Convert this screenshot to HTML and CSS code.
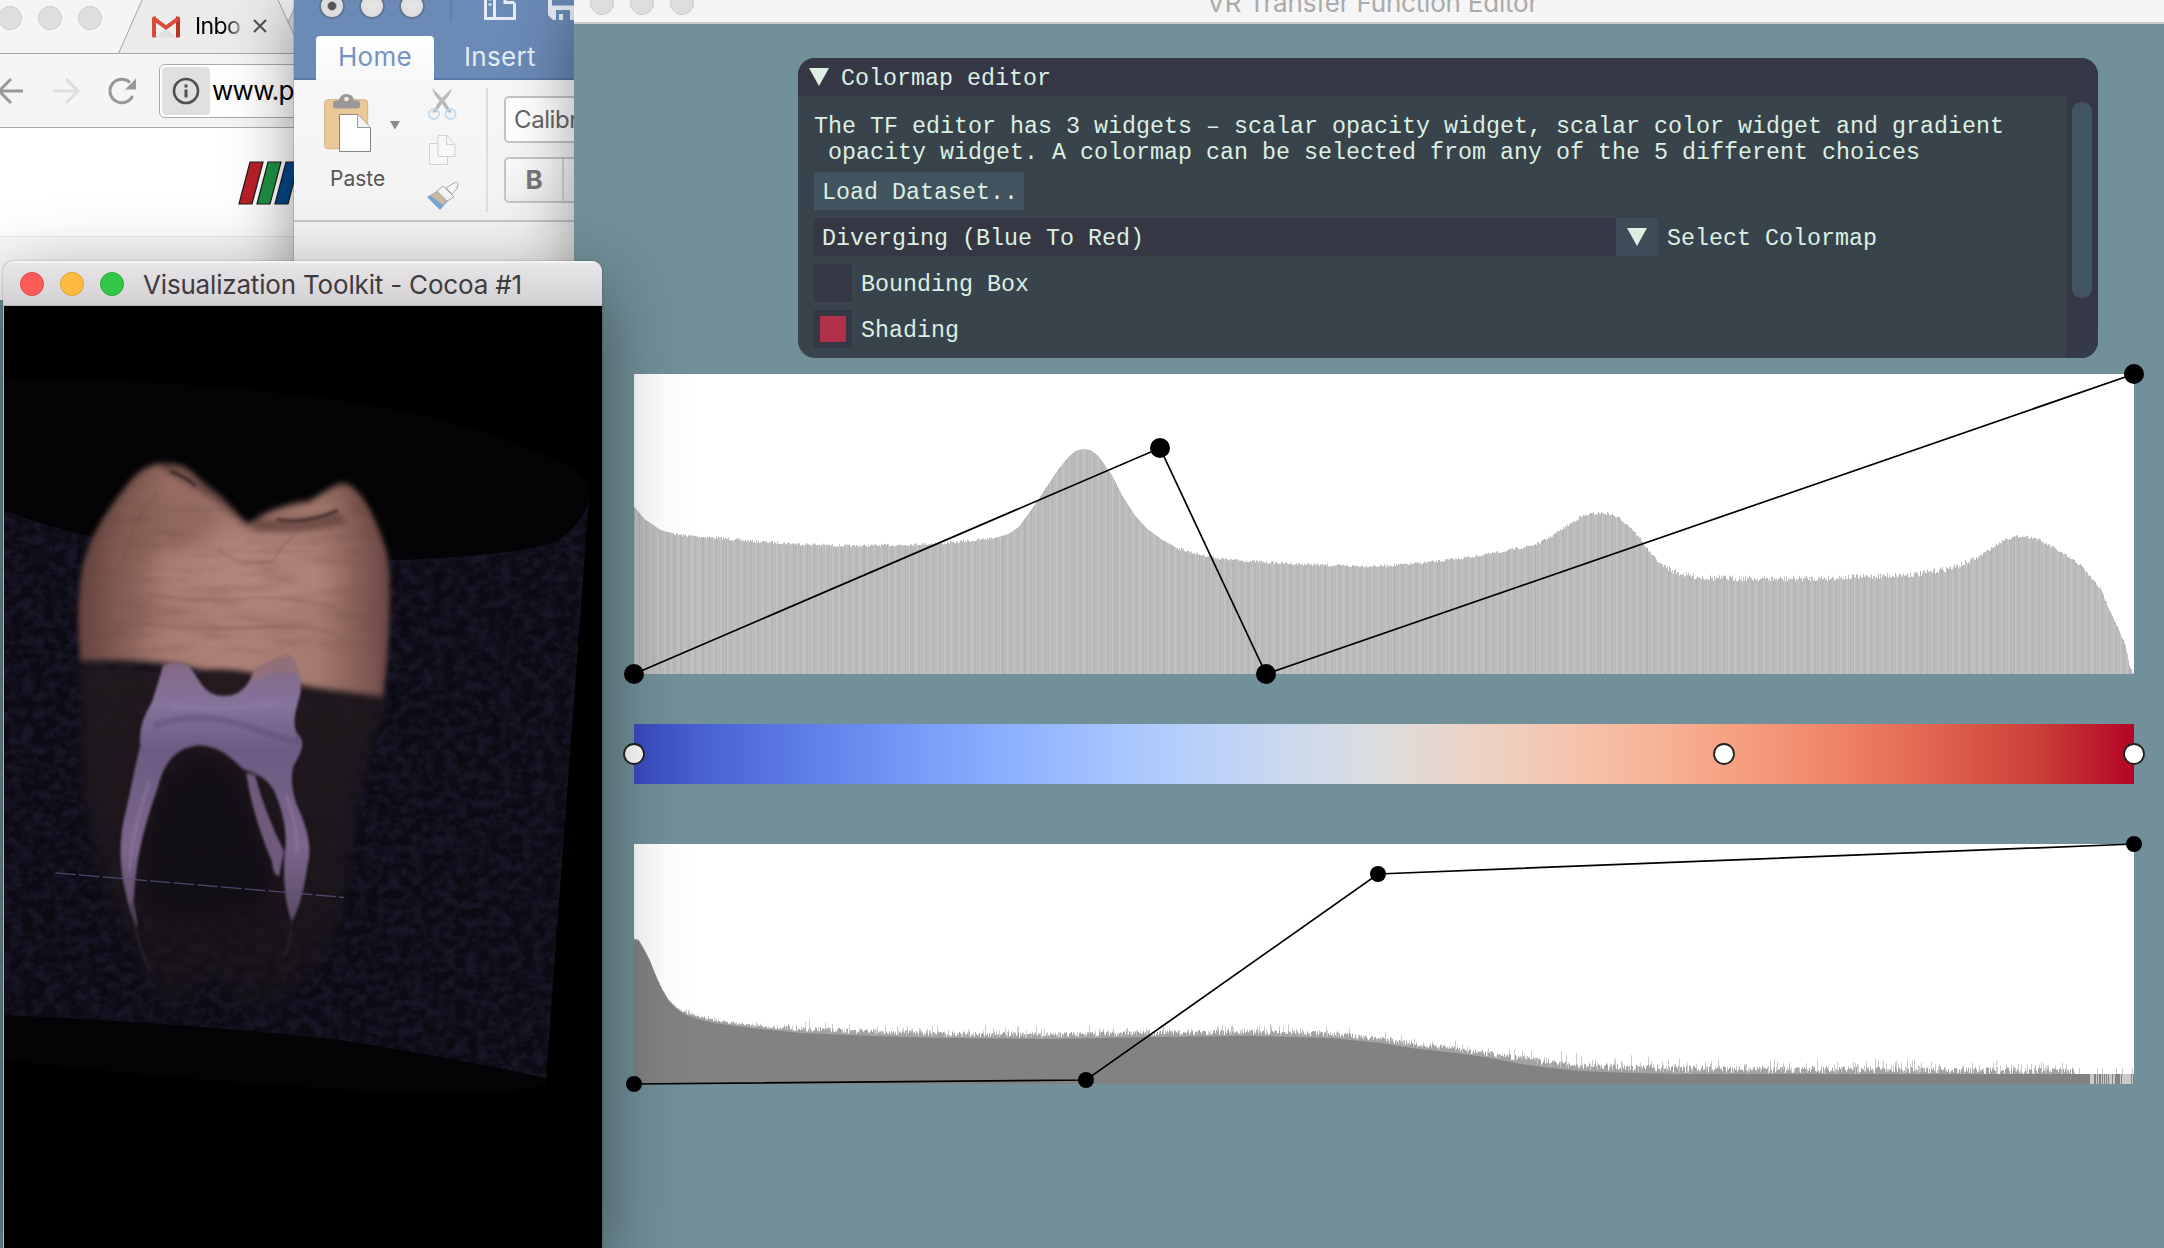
FILE: index.html
```html
<!DOCTYPE html>
<html lang="en">
<head>
<meta charset="utf-8">
<title>VR Transfer Function Editor</title>
<link rel="stylesheet" href="styles.css">
</head>
<body>
<div class="desktop">

  <section class="window chrome">
    <div class="tabstrip">
      <svg class="tab-shape" width="294" height="54" viewBox="0 0 294 54">
        <path d="M118.500 53.500L142.500-1H277.500L296 39V53.500Z" fill="#ebebeb"/>
        <path d="M288 22L298 0V44Z" fill="#dcdcdc"/>
        <path d="M0 53.500H118.500L142.500-1M277.500-1L296 39M288 23L298 0M118 53.500H294" fill="none" stroke="#a6a6a6"/>
      </svg>
      <div class="lights pale"><i></i><i></i><i></i></div>
      <div class="tab">
        <svg width="28" height="22" viewBox="0 0 28 22">
          <path d="M3 3H25V21.500H3Z" fill="#eee"/><path d="M4 21.500L14 12L24 21.500Z" fill="#dedede"/>
          <path d="M0 2.500Q0 .5 2 .5H4V21.500H1.500Q0 21.500 0 20Z" fill="#d54b3d"/>
          <path d="M28 2.500Q28 .5 26 .5H24V21.500H26.500Q28 21.500 28 20Z" fill="#b93326"/>
          <path d="M1.500 2.300L14 11.500L26.500 2.300" fill="none" stroke="#dc4a3d" stroke-width="4"/>
        </svg>
        <span class="tab-title">Inbo</span>
        <svg class="tab-close" width="14" height="14" viewBox="0 0 14 14"><path d="M1 1L13 13M13 1L1 13" stroke="#555" stroke-width="2.200"/></svg>
      </div>
    </div>
    <div class="navbar">
      <svg width="140" height="30" viewBox="0 0 140 30" fill="none" stroke-width="3">
        <path d="M23 15H-1M11 3L-1 15L11 27" stroke="#989898"/>
        <path d="M53 15H77M66 3L78 15L66 27" stroke="#dedede"/>
        <path d="M132.500 20A11.800 11.800 0 1 1 130 6.500" stroke="#989898"/>
        <path d="M136 2.500V13.500H125Z" fill="#989898"/>
      </svg>
      <div class="address">
        <span class="info"><svg width="28" height="28" viewBox="0 0 28 28"><circle cx="14" cy="14" r="12" fill="none" stroke="#505050" stroke-width="2.600"/><path d="M12.500 7.500h3v3h-3zM12.500 12.500h3v8h-3z" fill="#505050"/></svg></span>
        <span>www.p</span>
      </div>
    </div>
    <div class="webpage">
      <svg width="80" height="44" viewBox="0 0 80 44" stroke="#1c1c1c" stroke-width="1.200">
        <path d="M12 1H25L14 43H1Z" fill="#ba2027"/><path d="M30 1H43L32 43H19Z" fill="#1f9345"/><path d="M48 1H61L50 43H37Z" fill="#05478a"/>
      </svg>
      <div class="webpage-band"><i></i></div>
    </div>
  </section>

  <section class="window word">
    <div class="word-title">
      <div class="lights ring"><i class="dot"></i><i></i><i></i></div>
      <svg width="122" height="24" viewBox="0 0 122 24" fill="none" stroke="#e6ecf4" stroke-width="3">
        <path d="M-1 -2V22" stroke="#5d7ba7" stroke-width="1.500"/>
        <path d="M33.500 -4V18.500H62.500V3M42.500 -4V18M53 -4V2.500H62.500"/><path d="M36.500 4.500h3M36.500 -.5h3" stroke-width="1.800"/>
        <path d="M96 -2H124V20H101L96 15Z" fill="#e6ecf4" stroke="none"/><path d="M100 -2H122V5.500H100ZM104 10H118V20H104Z" fill="#6b8ab6" stroke="none"/><path d="M107 14h4v6h-4z" fill="#e6ecf4" stroke="none"/>
      </svg>
    </div>
    <div class="word-tabs"><span class="active">Home</span><span>Insert</span></div>
    <div class="ribbon">
      <div class="paste">
        <svg width="84" height="64" viewBox="0 0 84 64">
          <rect x=".7" y="6.700" width="43" height="49" rx="3" fill="#eac897" stroke="#d6b37f"/>
          <path d="M9 15V10Q9 7.500 12 7.500H15Q16 1 22.500 1Q29 1 30 7.500H33Q36 7.500 36 10V13Q36 15.500 33 15.500H12Q9 15.500 9 13Z" fill="#999"/><circle cx="22.500" cy="6" r="2.300" fill="#f8ead5"/>
          <path d="M15.500 21.500H34L46.500 34.500V58.500H15.500Z" fill="#fff" stroke="#858585"/><path d="M33.500 21.500V34.500H46.500" fill="#f3f3f3" stroke="#999"/>
          <path d="M66 28H76L71 36.500Z" fill="#8a8a8a"/>
        </svg>
        <span>Paste</span>
      </div>
      <svg class="clip-tools" width="34" height="124" viewBox="0 0 34 124" fill="none">
        <path d="M5 0Q7 8 14 14L21 24.500H25L17 12Z" fill="#b9b9b9"/><path d="M25 0Q23 8 16 14L9 24.500H5L13 12Z" fill="#b9b9b9"/>
        <circle cx="7" cy="26" r="5" stroke="#c5daed" stroke-width="2"/><circle cx="23.500" cy="26" r="5" stroke="#c5daed" stroke-width="2"/>
        <path d="M2.500 55.500H20.500V76.500H2.500Z" fill="#f7f7f7" stroke="#d2d2d2"/><path d="M11 47.500H20L28 56V68.500H11ZM19.500 47.500V56.500H28" fill="#f7f7f7" stroke="#d2d2d2"/>
        <path d="M0 109L13 122L22 112L10 103Z" fill="#77a5d8"/><path d="M3 107L12 103L21 112L16 117Q9 112 3 107Z" fill="#c9b9a5"/>
        <path d="M10 103L16 98L27 109L20 113Z" fill="#f3f3f3" stroke="#aaa"/><path d="M19 100L27 95Q31 93 31 97Q31 101 25 106Z" fill="#f5f5f5" stroke="#aaa"/>
      </svg>
      <div class="font-group">
        <div class="font-name">Calibri</div>
        <div class="font-bold"><b>B</b></div>
      </div>
    </div>
    <div class="word-page"></div>
  </section>

  <section class="window editor">
    <header class="editor-title">
      <div class="lights pale"><i></i><i></i><i></i></div>
      <h1>VR Transfer Function Editor</h1>
    </header>
    <div class="editor-body">
      <div class="panel">
        <div class="panel-title"><i class="arrow"></i><span>Colormap editor</span></div>
        <div class="panel-main">
          <div class="panel-content">
            <p>The TF editor has 3 widgets – scalar opacity widget, scalar color widget and gradient
 opacity widget. A colormap can be selected from any of the 5 different choices</p>
            <button class="load">Load Dataset..</button>
            <div class="row"><div class="combo"><span>Diverging (Blue To Red)</span><b><i class="arrow"></i></b></div><span>Select Colormap</span></div>
            <div class="row"><div class="check"></div><span>Bounding Box</span></div>
            <div class="row"><div class="check on"></div><span>Shading</span></div>
          </div>
          <div class="scrollbar"><div class="thumb"></div><svg width="32" height="36" viewBox="0 0 32 36"><path d="M32 0V36H0Z" fill="#343a48"/></svg></div>
        </div>
      </div>

      <svg class="chart opacity" width="1500" height="300" viewBox="0 0 1500 300">
        <rect width="1500" height="300" fill="#fff"/>
        <g id="scalar"></g>
        <polyline points="0,300 526,74 632,300 1500,0"/>
        <g><circle cx="0" cy="300" r="10"/><circle cx="526" cy="74" r="10"/><circle cx="632" cy="300" r="10"/><circle cx="1500" cy="0" r="10"/></g>
      </svg>

      <div class="colorbar">
        <svg width="1500" height="60" viewBox="0 0 1500 60" fill="#fff" stroke="#222" stroke-width="1.800">
          <circle cx="0" cy="30" r="10"/><circle cx="1090" cy="30" r="10"/><circle cx="1500" cy="30" r="10"/>
        </svg>
      </div>

      <svg class="chart gradient" width="1500" height="240" viewBox="0 0 1500 240">
        <rect width="1500" height="240" fill="#fff"/>
        <g id="magnitude"></g>
        <polyline points="0,240 452,236 744,30 1500,0"/>
        <g><circle cx="0" cy="240" r="8"/><circle cx="452" cy="236" r="8"/><circle cx="744" cy="30" r="8"/><circle cx="1500" cy="0" r="8"/></g>
      </svg>
    </div>
  </section>

  <section class="window vtk">
    <header class="vtk-title">
      <div class="lights color"><i></i><i></i><i></i></div>
      <span>Visualization Toolkit - Cocoa #1</span>
    </header>
    <svg class="volume" width="598" height="942" viewBox="4 306 598 942">
      <defs>
        <filter id="grain" x="0" y="0" width="100%" height="100%"><feTurbulence type="fractalNoise" baseFrequency=".09 .11" numOctaves="3" seed="4"/><feColorMatrix values="0 0 0 0 .14  0 0 0 0 .13  0 0 0 0 .22  3 0 0 0 -1.100"/></filter>
        <filter id="enamel" x="0" y="0" width="100%" height="100%"><feTurbulence type="fractalNoise" baseFrequency=".008 .05" numOctaves="3" seed="8"/><feColorMatrix values="0 0 0 0 .38  0 0 0 0 .24  0 0 0 0 .21  2.400 0 0 0 -1.050"/></filter>
        <filter id="b3" x="-20%" y="-20%" width="140%" height="140%"><feGaussianBlur stdDeviation="3"/></filter>
        <filter id="b6" x="-20%" y="-20%" width="140%" height="140%"><feGaussianBlur stdDeviation="7"/></filter>
        <filter id="b12" x="-20%" y="-20%" width="140%" height="140%"><feGaussianBlur stdDeviation="14"/></filter>
        <filter id="b20" x="-60%" y="-150%" width="220%" height="400%"><feGaussianBlur stdDeviation="26"/></filter>
        <linearGradient id="side" x1="0" x2="1"><stop offset="0" stop-color="#5c3c38"/><stop offset=".12" stop-color="#7d5851"/><stop offset=".3" stop-color="#a07469"/><stop offset=".5" stop-color="#ab7f76"/><stop offset=".75" stop-color="#a57a6e"/><stop offset=".92" stop-color="#7c5550"/><stop offset="1" stop-color="#56393a"/></linearGradient>
        <linearGradient id="pulp" x1="0" x2="0" y1="0" y2="1"><stop offset="0" stop-color="#836780"/><stop offset=".18" stop-color="#85739c"/><stop offset=".35" stop-color="#6d5b83"/><stop offset=".7" stop-color="#7b668b"/><stop offset="1" stop-color="#584661"/></linearGradient>
        <linearGradient id="root" x1="0" x2="0" y1="0" y2="1"><stop offset="0" stop-color="#231b1f"/><stop offset=".6" stop-color="#1e171c"/><stop offset="1" stop-color="#1c151a" stop-opacity=".5"/></linearGradient>
        <clipPath id="wall"><path d="M4 510Q45 527 91 536Q250 563 395 560Q500 556 546 545Q580 532 589 500L556 940L546 1078Q440 1055 340 1040Q200 1024 4 1015Z"/></clipPath>
        <clipPath id="crownClip"><path d="M203 630C195 560 196 480 208 420C228 350 263 300 323 234C358 194 390 186 430 188C480 192 495 218 540 248C580 272 605 312 632 322C665 294 740 274 780 272C820 254 840 234 870 232C918 239 960 330 980 390C992 450 985 620 968 710C900 700 840 696 770 685C700 668 600 662 520 652C420 630 300 626 203 630Z"/></clipPath>
      </defs>
      <rect x="4" y="306" width="598" height="942" fill="#000"/>
      <path d="M4 378Q230 380 400 410Q510 435 575 470Q592 482 589 500L546 1085Q500 1096 430 1094Q200 1083 4 1060Z" fill="#040406"/>
      <g clip-path="url(#wall)">
        <rect x="0" y="490" width="602" height="620" fill="#0c0b14"/>
        <rect x="0" y="490" width="602" height="620" filter="url(#grain)" opacity=".5"/>
      </g>
      <g transform="translate(0 380) scale(.3954 .4464)">
        <path d="M205 630L975 690Q950 800 915 880Q885 1050 860 1200Q800 1380 650 1415Q600 1420 540 1330Q480 1420 400 1380Q370 1370 345 1280Q250 1120 220 950Q200 800 205 630Z" fill="url(#root)" filter="url(#b12)" opacity=".85"/>
        <path d="M400 920Q500 780 610 900L680 1090L670 1180Q560 1200 400 1200L350 1120Z" fill="#0f0c13" filter="url(#b20)" opacity=".75"/>
        <g filter="url(#b6)">
          <g clip-path="url(#crownClip)">
            <rect x="180" y="170" width="830" height="570" fill="url(#side)"/>
            <path d="M200 430Q260 280 420 190L640 320L860 230L990 400L960 180H200Z" fill="#5c3e39" opacity=".55" filter="url(#b20)"/>
            <ellipse cx="620" cy="440" rx="250" ry="80" fill="#bd8f85" opacity=".45" filter="url(#b20)"/>
            <ellipse cx="500" cy="590" rx="170" ry="34" fill="#bd8f85" opacity=".45" filter="url(#b20)"/>
            <path d="M330 260Q430 220 560 300Q520 380 400 370Q320 420 280 440Z" fill="#805a4e" opacity=".5" filter="url(#b20)"/>
            <path d="M640 312Q760 320 850 295L880 320Q760 350 640 335Z" fill="#4f3330" opacity=".6" filter="url(#b3)"/>
            <path d="M410 190Q540 250 630 320" fill="none" stroke="#3f292c" stroke-width="20" opacity=".5" filter="url(#b3)"/>
          </g>
        </g>
        <g clip-path="url(#crownClip)" fill="none" stroke="#6a4742" filter="url(#b3)" stroke-width="4">
          <rect x="230" y="270" width="720" height="340" filter="url(#enamel)" opacity=".2" stroke="none"/>
          <path d="M555 380Q600 420 690 405Q720 360 750 345M400 250Q340 310 310 400M370 480Q520 500 620 490T850 510M360 545Q520 565 640 555T850 570" opacity=".35"/>
          <path d="M700 312Q770 325 855 292M430 204Q470 216 495 238" stroke="#211517" stroke-width="5" opacity=".8"/>
        </g>
        <path d="M500 660Q560 640 650 660L620 700Q570 715 520 700Z" fill="#251a1e" filter="url(#b6)"/>
        <g filter="url(#b3)">
          <path d="M412 640Q440 626 475 638C500 660 510 700 550 706C600 714 625 690 640 655C670 625 700 630 725 615C750 620 765 670 760 700C750 740 738 760 750 790C775 810 765 830 742 865C735 890 738 920 750 950C780 1010 790 1050 777 1090C770 1140 755 1190 738 1212C722 1180 715 1120 720 1060C730 1010 710 950 690 915C670 890 650 882 615 872C580 840 545 818 500 818C440 825 415 860 400 910C365 1000 345 1060 338 1170L350 1230Q325 1190 318 1150C300 1090 300 1020 320 960C335 900 345 850 355 820C350 780 365 750 385 720C395 690 405 665 412 640Z" fill="url(#pulp)"/>
          <path d="M622 880L645 885Q670 970 718 1055L706 1112Q690 1110 688 1080Q640 980 622 880Z" fill="#705a7b"/>
          <path d="M390 775Q500 735 640 780T745 800" fill="none" stroke="#57466e" stroke-width="14" opacity=".35"/>
          <path d="M430 730Q560 745 700 725" fill="none" stroke="#9782ae" stroke-width="14" opacity=".3"/>
          <path d="M378 900Q340 990 326 1100M725 930Q750 990 752 1060" fill="none" stroke="#94799f" stroke-width="9" opacity=".5"/>
          <path d="M332 1170Q345 1270 380 1320M738 1210Q735 1260 720 1290" fill="none" stroke="#3c2f3b" stroke-width="8" opacity=".4"/>
          <path d="M640 655Q670 625 725 615Q750 620 755 660Q700 640 640 680Z" fill="#9a7370" opacity=".6"/>
        </g>
        <path d="M140 1104L870 1159" stroke="#55527c" stroke-width="3" stroke-dasharray="52 8" opacity=".85"/>
      </g>
    </svg>
  </section>
</div>
<script src="histogram.js"></script>
</body>
</html>
```
FILE: styles.css
```css
* { box-sizing: border-box; }
html { overflow: hidden; }
body { margin: 0; height: 1248px; overflow: hidden; background: #72909a; font-family: Inter, "Liberation Sans", sans-serif; }
.desktop { position: relative; width: 2164px; height: 1248px; overflow: hidden; }
.window { position: absolute; overflow: hidden; }

.lights { display: flex; gap: 16px; }
.lights i { width: 24px; height: 24px; border-radius: 50%; }
.pale i { background: #dedede; border: 1px solid #cbcbcb; }
.ring i { width: 26px; height: 26px; background: radial-gradient(#e6e6e6, #dadada); border: 2px solid #5e7494; }
.ring { gap: 14px; }
.ring .dot { background: radial-gradient(circle, #555 0 3.500px, #dedede 5px); }
.color i:nth-child(1) { background: #fc5b57; border: 1px solid #e24640; }
.color i:nth-child(2) { background: #fdbc40; border: 1px solid #dfa032; }
.color i:nth-child(3) { background: #33c748; border: 1px solid #27ab35; }

/* browser */
.chrome { left: 0; top: 0; width: 294px; height: 300px; background: #fff; }
.tabstrip { position: relative; display: flex; height: 54px; background: #f5f5f5; }
.tab-shape { position: absolute; left: 0; top: 0; }
.tabstrip .lights { position: relative; margin: 6px 0 0 -2px; }
.tab { position: relative; display: flex; align-items: flex-start; margin-left: 50px; padding-top: 16px; }
.tab-title { width: 47px; margin: -6px 11px 0 15px; font: 23px/32px Inter, sans-serif; letter-spacing: -.6px; overflow: hidden; background: linear-gradient(90deg, #000 60%, #aaa); -webkit-background-clip: text; color: transparent; }
.tab-close { margin-top: 3px; }
.navbar { display: flex; align-items: center; height: 74px; background: #f5f5f5; border-bottom: 1px solid #aaa; }
.navbar > svg { flex: none; }
.address { display: flex; align-items: center; flex: none; width: 200px; height: 54px; margin-left: 19px; padding: 2px; gap: 2px; background: #fff; border: 1px solid #aaa; border-radius: 6px; font: 26px Inter, sans-serif; letter-spacing: -.7px; }
.info { display: flex; align-items: center; justify-content: center; width: 48px; height: 48px; background: #e0e0e0; border-radius: 4px; }
.webpage { padding-top: 33px; }
.webpage > svg { display: block; margin-left: 238px; }
.webpage-band { height: 64px; margin-top: 31px; padding: 25px 0 0 236px; background: #f9f9f9; border-top: 1px solid #e9e9e9; }
.webpage-band i { display: block; width: 18px; height: 4px; background: #333; }

/* word processor */
.word { left: 294px; top: 0; width: 290px; height: 300px; background: #f4f4f4; box-shadow: 0 10px 60px rgba(0,0,0,.42), 0 0 1px #444; }
.word-title { display: flex; height: 36px; background: #6b8ab6; }
.word-title .lights { margin: -7px 0 0 25px; flex: none; }
.word-title svg { flex: none; margin-left: 27px; overflow: visible; }
.word-tabs { display: flex; height: 44px; padding-left: 22px; background: #6b8ab6; border-bottom: 2px solid #5877a4; }
.word-tabs span { padding: 2px 0 0 30px; font: 26px/38px Inter, sans-serif; letter-spacing: .3px; color: #e4ebf4; }
.word-tabs .active { flex: none; width: 118px; height: 44px; padding: 2px 0 0; text-align: center; background: linear-gradient(#fff, #f7f7f7); color: #7593c0; border-radius: 4px 4px 0 0; }
.ribbon { display: flex; height: 142px; padding-top: 8px; background: linear-gradient(#f7f7f7, #f3f3f3); border-bottom: 2px solid #c6c6c6; }
.paste { width: 84px; margin: 5px 0 0 30px; flex: none; display: flex; flex-direction: column; }
.paste span { margin: 6px 0 0 6px; font-size: 21px; line-height: 32px; letter-spacing: 0; color: #555; }
.clip-tools { margin-left: 19px; flex: none; }
.font-group { margin-left: 25px; height: 124px; padding: 8px 0 0 16px; border-left: 2px solid #dedede; display: flex; flex-direction: column; gap: 14px; }
.font-name, .font-bold { width: 110px; height: 47px; border: 2px solid #c4c4c4; border-radius: 5px; background: #fff; font-size: 24px; line-height: 43px; letter-spacing: -.4px; padding-left: 8px; color: #666; }
.font-bold { height: 46px; padding: 0; background: linear-gradient(#fafafa, #eee); line-height: 42px; }
.font-bold b { display: block; width: 58px; border-right: 2px solid #d5d5d5; text-align: center; font-size: 26px; color: #777; }
.word-page { height: 80px; }

/* transfer function editor */
.editor { left: 574px; top: 0; width: 1590px; height: 1248px; background: #72909a; box-shadow: 0 10px 60px rgba(0,0,0,.38); }
.editor-title { display: flex; height: 24px; padding-left: 16px; background: #f5f5f5; border-bottom: 2px solid #cacaca; }
.editor-title .lights { margin-top: -9px; height: 24px; flex: none; }
.editor-title h1 { margin: -13px 0 0 513px; font: 26px/32px Inter, sans-serif; letter-spacing: -.2px; color: #ababab; white-space: nowrap; }
.editor-body { padding: 34px 0 0 60px; display: flex; flex-direction: column; }
.panel { width: 1300px; height: 300px; margin-left: 164px; background: #39434b; border-radius: 17px; overflow: hidden; font: 23.330px/26px "Liberation Mono", monospace; color: #dbefe3; }
.panel-title { display: flex; align-items: center; gap: 12px; height: 38px; padding-left: 11px; background: #353844; }
.panel-title span, .row span { padding-top: 4px; }
.arrow { display: block; width: 20px; height: 18px; background: #dbefe3; clip-path: polygon(0 0, 100% 0, 50% 100%); }
.panel-main { display: flex; height: 262px; }
.panel-content { flex: 1; padding: 18px 0 0 16px; display: flex; flex-direction: column; gap: 8px; align-items: flex-start; }
.panel p { margin: 0 0 -2px; height: 52px; white-space: pre; }
.load { width: 210px; height: 38px; margin: 0; padding: 3px 0 0 8px; border: 0; background: #41535e; color: inherit; font: inherit; text-align: left; white-space: nowrap; }
.row { display: flex; align-items: center; height: 38px; gap: 9px; }
.combo { display: flex; align-items: center; justify-content: space-between; width: 844px; height: 38px; padding-left: 8px; background: #353844; }
.combo b { display: flex; align-items: center; justify-content: center; width: 42px; height: 38px; background: #3f4c5a; }
.check { width: 38px; height: 38px; padding: 6px; background: #353844; }
.on::before { content: ""; display: block; height: 26px; background: #b02f49; }
.scrollbar { width: 32px; display: flex; flex-direction: column; justify-content: space-between; padding-top: 6px; background: #353844; }
.thumb { width: 20px; height: 196px; margin-left: 6px; border-radius: 9px; background: #415462; }
.chart { overflow: visible; display: block; }
.chart polyline { fill: none; stroke: #000; stroke-width: 1.700; }
.opacity { margin-top: 16px; }
.colorbar { width: 1500px; height: 60px; margin: 50px 0 60px; background: linear-gradient(90deg, #3b4cc0, #4d68d7 6.250%, #6282ea 12.500%, #779af7 18.750%, #8db0fe 25%, #a3c2ff 31.250%, #b8d0f9 37.500%, #ccd9ee 43.750%, #ddd 50%, #ecd3c5 56.250%, #f5c4ad 62.500%, #f7b194 68.750%, #f49a7b 75%, #ec7f63 81.250%, #de604d 87.500%, #cb3e38 93.750%, #b40426); }
.colorbar svg { display: block; overflow: visible; }

/* render window */
.vtk { left: 3px; top: 261px; width: 599px; height: 987px; padding-left: 1px; border-radius: 10px 10px 0 0; background: #b9b9b9; box-shadow: 0 24px 80px rgba(0,0,0,.46), 0 0 2px rgba(0,0,0,.35); }
.vtk-title { display: flex; align-items: center; height: 45px; margin-left: -1px; padding-left: 17px; gap: 19px; background: linear-gradient(#e8e6e8, #d2d0d2); border-top: 2px solid #f5f4f5; border-bottom: 1px solid #b5b3b5; font-size: 26px; letter-spacing: -.18px; color: #3e3b40; white-space: nowrap; }
.volume { display: block; }
.volume filter { color-interpolation-filters: sRGB; }
```
FILE: histogram.js
```js
// Envelopes of the two histograms as [x, y] pairs in chart pixels.
const scalar = [[0,134],[10,146],[26,157],[44,162],[85,165],[115,168],[165,171],[215,173],[264,172],[314,170],[344,167],[364,164],[374,161],[384,154],[394,141],[404,126],[414,111],[424,96],[434,84],[441,78],[449,76],[456,77],[464,83],[471,93],[478,103],[488,123],[501,143],[513,156],[528,167],[543,175],[563,181],[588,186],[613,188],[662,191],[712,193],[746,193],[776,191],[806,188],[836,184],[866,179],[886,175],[903,171],[916,164],[931,154],[946,144],[956,141],[966,140],[976,141],[986,146],[996,154],[1006,166],[1016,180],[1026,191],[1041,199],[1056,203],[1076,205],[1146,206],[1196,205],[1246,203],[1286,201],[1321,194],[1341,186],[1356,176],[1371,166],[1386,163],[1401,165],[1421,176],[1446,192],[1466,216],[1481,249],[1491,273],[1496,296],[1500,300]];
const magnitude = [[0,95],[4,96],[10,106],[16,118],[22,133],[28,146],[34,156],[42,164],[51,170],[66,175],[86,179],[116,183],[166,188],[216,190],[266,192],[316,193],[416,194],[516,192],[616,191],[696,193],[746,198],[776,203],[821,208],[856,213],[886,219],[916,223],[946,226],[996,228],[1046,229],[1196,230],[1440,231],[1500,232]];

let seed = 7;
const rand = () => (seed = (seed * 16807) % 2147483647) / 2147483647;

function heightAt(points, x) {
  let i = 1;
  while (i < points.length - 1 && points[i][0] < x) i++;
  const [x0, y0] = points[i - 1], [x1, y1] = points[i];
  return y0 + (y1 - y0) * (x - x0) / (x1 - x0);
}

// Shades are painted in order, so later bars cover earlier ones.
function draw(id, base, shades, barsAt) {
  const paths = shades.map(() => "");
  for (let x = 0; x < 1500; x++) {
    for (const [shade, y] of barsAt(x)) paths[shade] += `M${x} ${base}V${y.toFixed(1)}h1V${base}z`;
  }
  document.getElementById(id).innerHTML = paths.map((d, i) => `<path d="${d}" fill="${shades[i]}"/>`).join("");
}

draw("scalar", 300, ["#bcbcbc", "#c4c4c4", "#b3b3b3"], x => {
  const rough = x > 1030 && x < 1340 ? 6 : x < 40 || (x > 360 && x < 540) ? 0 : 3;
  const shade = x % 7 === 2 ? 1 : x % 7 === 5 || x % 23 === 0 ? 2 : 0;
  return [[shade, heightAt(scalar, x) - 1 + (rand() - .5) * rough]];
});

draw("magnitude", 240, ["#cacaca", "#a2a2a2", "#828282"], x => {
  if (x > 1440) {
    const bars = [[rand() < (x - 1440) / 70 ? 0 : 2, 230]];
    return rand() < .1 ? [...bars, [0, 224]] : bars;
  }
  const top = heightAt(magnitude, x);
  const rough = x < 50 ? 1 : x < 150 ? 4 : x > 850 ? 11 : 8;
  return [[0, top - rand() * rand() * rough * 1.6], [1, top - rand() * rough * .7], [2, Math.min(230, top + 1)]];
});
```
